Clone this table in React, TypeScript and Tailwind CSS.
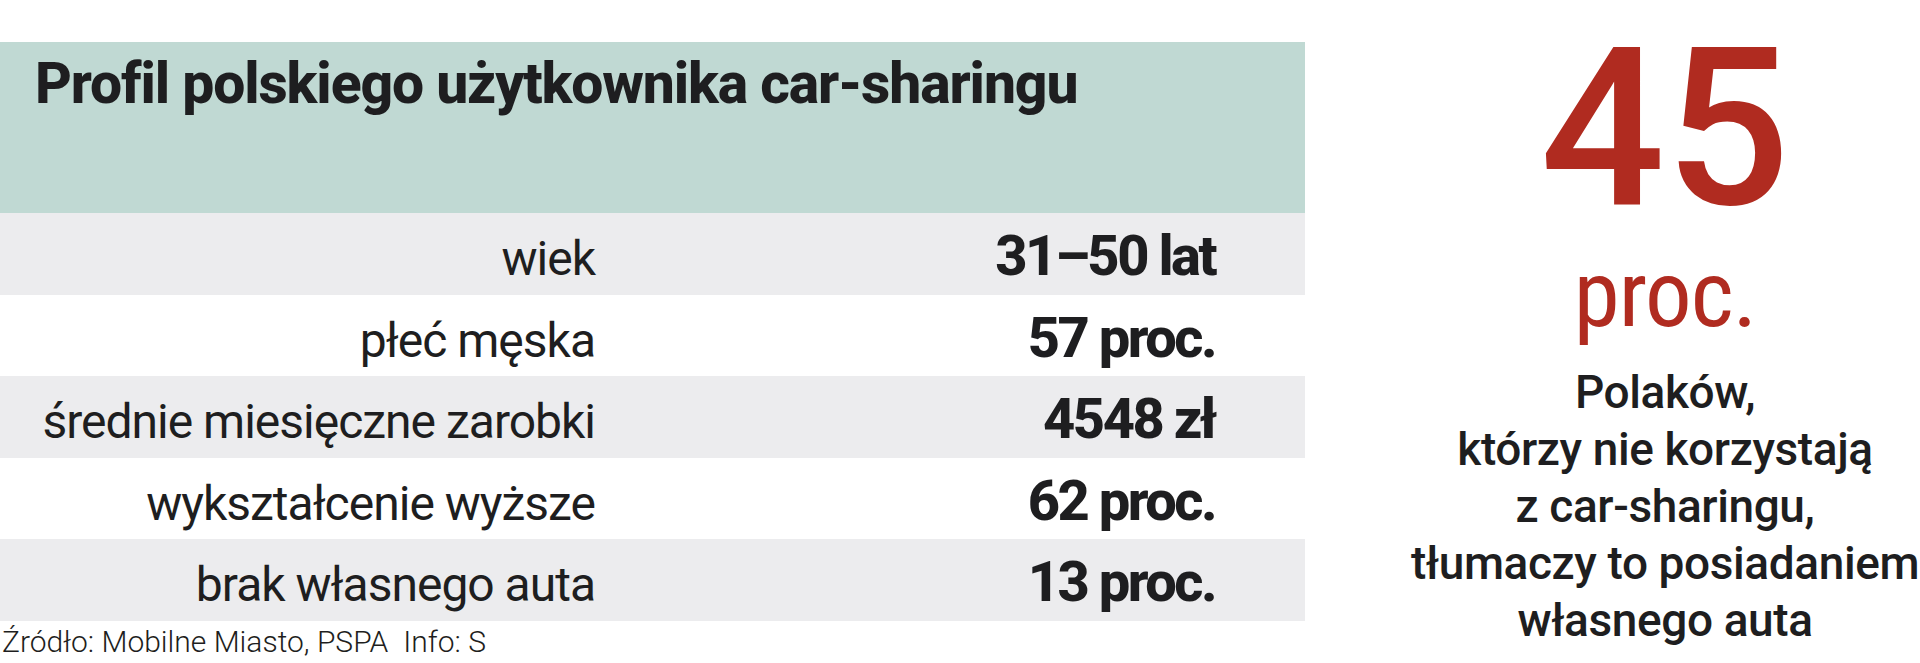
import React from "react";

const rows: { label: string; value: string; h: string; bg: string }[] = [
  { label: "wiek", value: "31–50 lat", h: "h-[82px]", bg: "bg-[#ececee]" },
  { label: "płeć męska", value: "57 proc.", h: "h-[81px]", bg: "bg-white" },
  { label: "średnie miesięczne zarobki", value: "4548 zł", h: "h-[82px]", bg: "bg-[#ececee]" },
  { label: "wykształcenie wyższe", value: "62 proc.", h: "h-[81px]", bg: "bg-white" },
  { label: "brak własnego auta", value: "13 proc.", h: "h-[82px]", bg: "bg-[#ececee]" },
];

export default function App() {
  return (
    <div className="w-[1920px] h-[663px] bg-white flex overflow-hidden font-['Roboto',_'Noto_Sans',_sans-serif] text-[#1e1e20]">
      <div className="w-[1305px] shrink-0 flex flex-col pt-[42px]">
        <div className="h-[171px] bg-[#c0d9d3] pl-[35px] pt-[13px]">
          <h1 className="text-[57px] leading-none font-extrabold tracking-[-1.1px] whitespace-nowrap">
            Profil polskiego użytkownika car-sharingu
          </h1>
        </div>
        {rows.map((r) => (
          <div key={r.label} className={`flex items-baseline pt-[15px] ${r.h} ${r.bg}`}>
            <div className="w-[595px] text-right text-[48px] leading-none font-normal tracking-[-1px] whitespace-nowrap">
              {r.label}
            </div>
            <div className="w-[620px] text-right text-[56px] leading-none font-extrabold tracking-[-2.5px] whitespace-nowrap">
              {r.value}
            </div>
          </div>
        ))}
        <div className="pt-[6px] pl-[2px] text-[30px] leading-none font-light whitespace-nowrap">
          Źródło: Mobilne Miasto, PSPA<span className="ml-[15px]">Info: S</span>
        </div>
      </div>
      <div className="flex-1 flex flex-col items-center pl-[105px] pt-[19px]">
        <div className="text-[220px] leading-none font-medium text-[#b02b20]">45</div>
        <div className="mt-[9px] text-[93px] leading-none font-normal tracking-[-1px] text-[#b02b20] [font-stretch:75%]">proc.</div>
        <div className="mt-[23px] flex flex-col items-center text-[46px] leading-[57px] font-medium tracking-[-0.4px]">
          <div className="whitespace-nowrap">Polaków,</div>
          <div className="whitespace-nowrap">którzy nie korzystają</div>
          <div className="whitespace-nowrap">z car-sharingu,</div>
          <div className="whitespace-nowrap">tłumaczy to posiadaniem</div>
          <div className="whitespace-nowrap">własnego auta</div>
        </div>
      </div>
    </div>
  );
}
